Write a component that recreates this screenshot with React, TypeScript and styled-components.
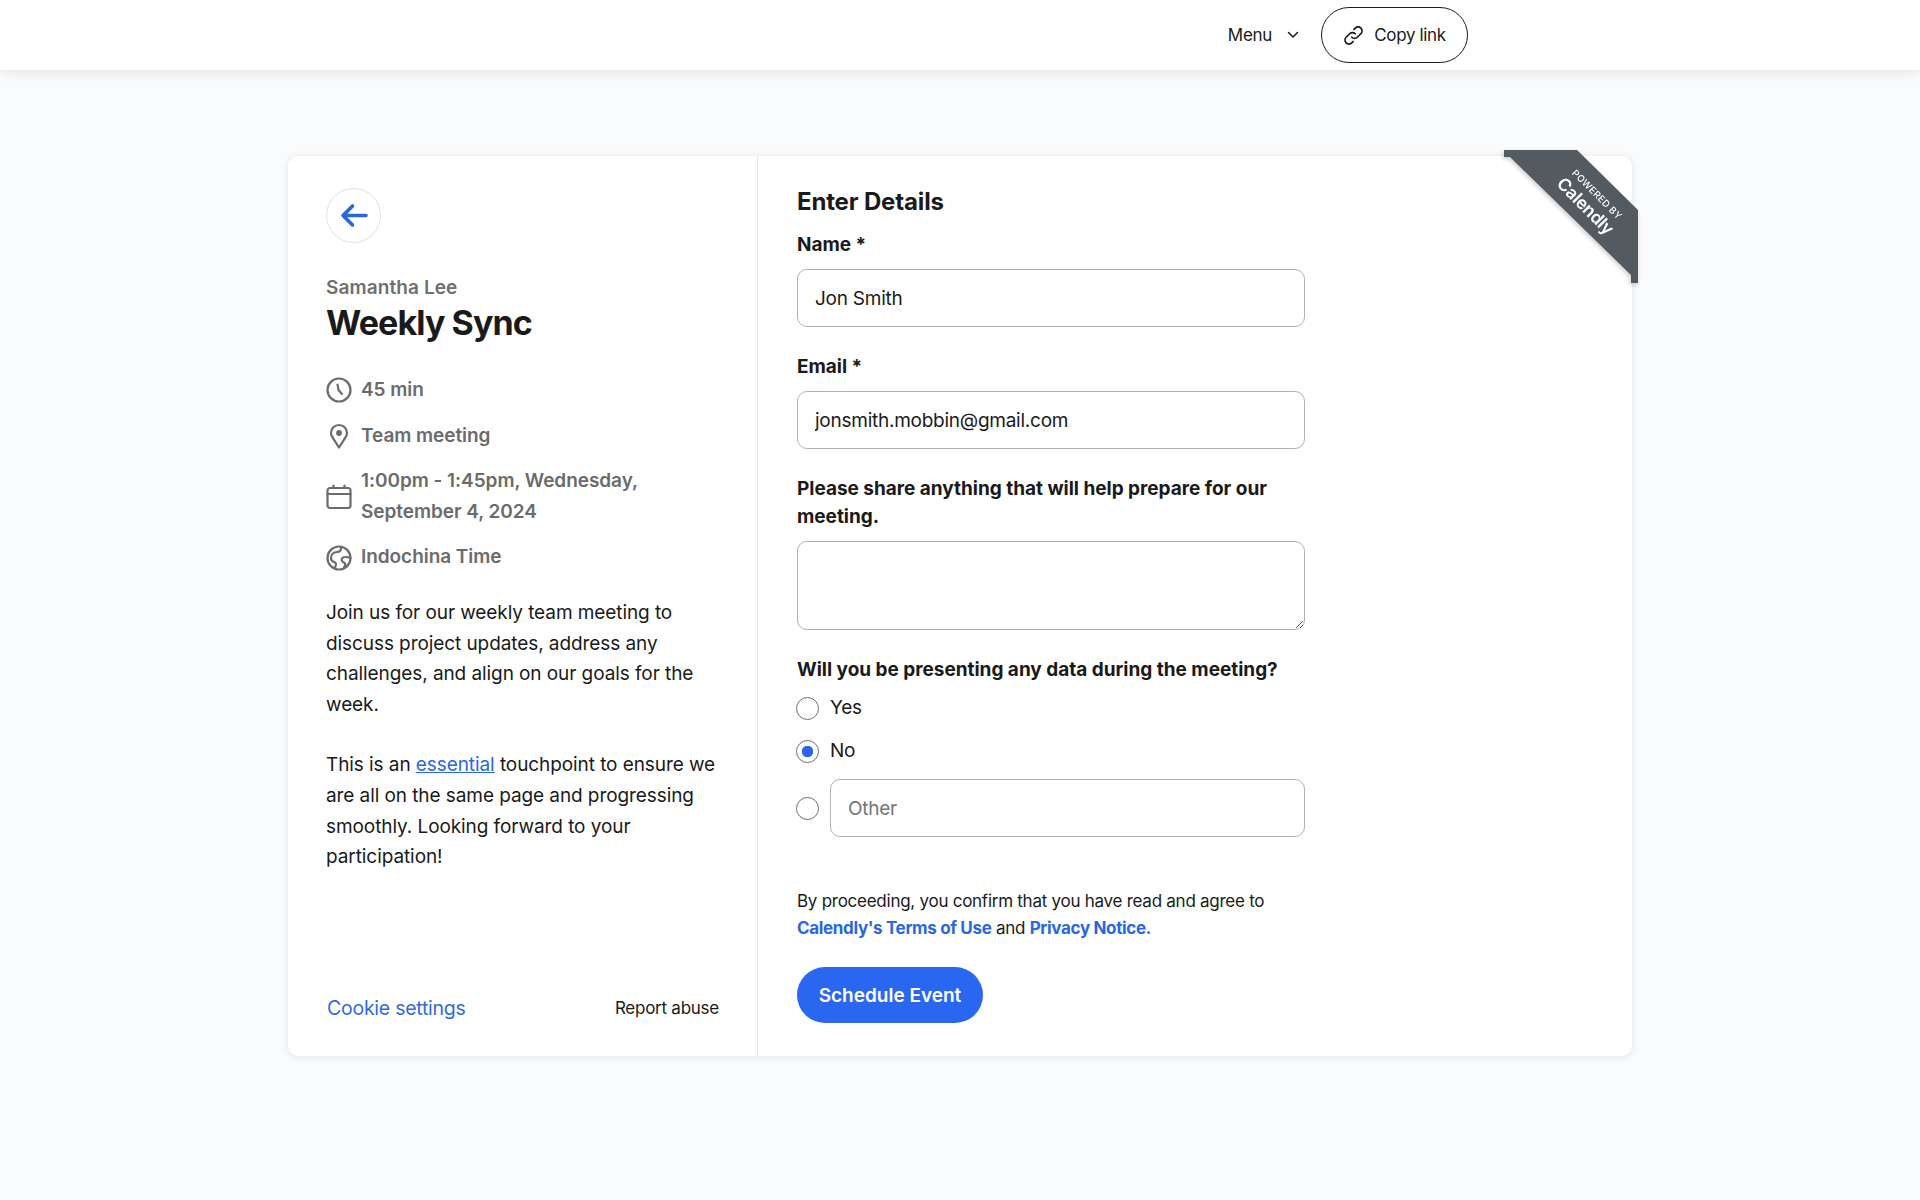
import styled, { createGlobalStyle } from 'styled-components';

const GlobalStyle = createGlobalStyle`
  html, body {
    margin: 0;
    padding: 0;
    background: #fafbfd;
  }
  * {
    box-sizing: border-box;
  }
  body {
    font-family: Inter, "Liberation Sans", sans-serif;
    color: #1a1a1a;
    min-height: 1200px;
  }
`;

const TopBar = styled.header`
  height: 70px;
  background: #fff;
  box-shadow: 0 2px 12px rgba(0, 0, 0, 0.1);
  display: flex;
  align-items: center;
  justify-content: flex-end;
  padding: 0 452px 0 0;
`;

const MenuButton = styled.div`
  display: flex;
  align-items: center;
  gap: 15px;
  font-size: 17px;
  letter-spacing: -0.3px;
  color: #1a1a1a;
  margin-right: 22px;
`;

const CopyLink = styled.div`
  height: 56px;
  width: 147px;
  border: 1.5px solid #1a1a1a;
  border-radius: 28px;
  display: flex;
  align-items: center;
  justify-content: center;
  gap: 10px;
  font-size: 17px;
  letter-spacing: -0.35px;
`;

const Card = styled.main`
  position: relative;
  width: 1344px;
  height: 900px;
  margin: 86px 0 0 288px;
  background: #fff;
  border-radius: 10px;
  box-shadow: 0 1px 8px rgba(0, 0, 0, 0.1);
  display: grid;
  grid-template-columns: 470px 1fr;
`;

const RibbonShadow = styled.div`
  position: absolute;
  top: -6px;
  right: -6px;
  filter: drop-shadow(-1px 2px 2px rgba(0, 0, 0, 0.2));
`;

const Ribbon = styled.a`
  position: relative;
  display: block;
  width: 134px;
  height: 133px;
  background: #545b60;
  clip-path: polygon(0 0, 73px 0, 134px 60px, 134px 133px, 127px 133px, 127px 125px, 6px 7px, 0 7px);
  color: #fff;
`;

const RibbonText = styled.div`
  position: absolute;
  top: 37px;
  left: 41px;
  width: 90px;
  transform: rotate(45deg);
  text-align: center;
  line-height: 1;
`;

const RibbonSmall = styled.div`
  font-size: 9.5px;
  font-weight: 500;
  letter-spacing: 0.3px;
  white-space: nowrap;
`;

const RibbonBrand = styled.div`
  font-size: 17.5px;
  font-weight: 600;
  letter-spacing: -0.3px;
  margin-top: 2px;
`;

const InfoPanel = styled.section`
  border-right: 1px solid #e8e8e8;
  padding: 32px 38px 36px;
  display: flex;
  flex-direction: column;
`;

const BackButton = styled.div`
  width: 55px;
  height: 55px;
  border-radius: 50%;
  border: 1px solid #e0e0e0;
  display: flex;
  align-items: center;
  justify-content: center;
  margin-bottom: 30px;
`;

const Organizer = styled.div`
  font-size: 19px;
  font-weight: 600;
  line-height: 30px;
  letter-spacing: 0.1px;
  color: #6f6f6f;
`;

const EventName = styled.h1`
  margin: 0 0 32px;
  font-size: 34px;
  font-weight: 700;
  line-height: 40px;
  letter-spacing: -0.9px;
  color: #1a1a1a;
`;

const MetaRow = styled.div`
  display: flex;
  align-items: center;
  gap: 9px;
  margin-bottom: 15px;
  font-size: 19px;
  font-weight: 600;
  line-height: 30.6px;
  letter-spacing: -0.05px;
  color: #6b6b6b;
`;

const MetaIcon = styled.svg`
  width: 26px;
  height: 26px;
  flex: none;
  fill: none;
  stroke: #6b6b6b;
  stroke-width: 2.2;
  stroke-linecap: round;
  stroke-linejoin: round;
`;

const DescriptionBlock = styled.div`
  margin-top: 10px;
`;

const Description = styled.p`
  margin: 0 0 30px;
  font-size: 19px;
  line-height: 30.6px;
  letter-spacing: -0.08px;
  color: #1a1a1a;
`;

const InlineLink = styled.a`
  color: #2a67e0;
  text-decoration: underline;
`;

const InfoFooter = styled.div`
  margin-top: auto;
  display: flex;
  align-items: center;
  justify-content: space-between;
  padding-left: 1px;
`;

const CookieLink = styled.a`
  font-size: 19.5px;
  letter-spacing: -0.25px;
  color: #2f6bdc;
`;

const ReportLink = styled.a`
  font-size: 17px;
  letter-spacing: -0.25px;
  color: #1a1a1a;
`;

const FormPanel = styled.section`
  padding: 29px 38px 32px 39px;
  width: 585px;
`;

const FormTitle = styled.h2`
  margin: 0 0 12px;
  font-size: 24px;
  font-weight: 700;
  line-height: 34px;
  letter-spacing: -0.15px;
`;

const Label = styled.label`
  display: block;
  font-size: 19px;
  font-weight: 700;
  line-height: 28px;
  letter-spacing: -0.02px;
  color: #1a1a1a;
  margin-bottom: 10px;
`;

const TextInput = styled.input`
  display: block;
  width: 100%;
  height: 58px;
  padding: 0 17px;
  border: 1px solid #b2b2b2;
  border-radius: 10px;
  background: #fff;
  font-family: inherit;
  font-size: 19px;
  letter-spacing: -0.25px;
  color: #1a1a1a;
  outline: none;
  margin-bottom: 26px;

  &::placeholder {
    color: #767676;
  }
`;

const TextBox = styled.textarea`
  display: block;
  width: 100%;
  height: 89px;
  border: 1px solid #b2b2b2;
  border-radius: 10px;
  background: #fff;
  outline: none;
  margin-bottom: 26px;
  resize: vertical;
`;

const RadioGroup = styled.div`
  display: flex;
  flex-direction: column;
  gap: 13px;
  margin: -1px 0 0 -1px;
`;

const RadioRow = styled.div`
  display: flex;
  align-items: center;
  gap: 11px;
  font-size: 19px;
  line-height: 30px;
  letter-spacing: -0.25px;
  color: #1a1a1a;
`;

const Radio = styled.input.attrs({ type: 'radio' })`
  appearance: none;
  flex: none;
  width: 23px;
  height: 23px;
  margin: 0;
  border: 1px solid #6f6f6f;
  border-radius: 50%;
  background: #fff;

  &:checked {
    background: radial-gradient(circle, #2a67f0 0 5.5px, #fff 6px);
  }
`;

const OtherInput = styled(TextInput)`
  flex: 1;
  margin-bottom: 0;
`;

const Legal = styled.p`
  margin: 51px 0 25px;
  font-size: 17px;
  line-height: 27px;
  letter-spacing: -0.26px;
  color: #1a1a1a;
`;

const LegalLink = styled.a`
  color: #2a67e0;
  font-weight: 700;
  letter-spacing: -0.34px;
`;

const SubmitButton = styled.button`
  width: 186px;
  height: 56px;
  border: none;
  border-radius: 28px;
  background: #2a67f0;
  color: #fff;
  font-family: inherit;
  font-size: 19px;
  font-weight: 600;
  letter-spacing: 0;
`;

export default function App() {
  return (
    <>
      <GlobalStyle />
      <TopBar>
        <MenuButton>
          Menu
          <svg width="12" height="8" viewBox="0 0 12 8" fill="none" stroke="#1a1a1a" strokeWidth="1.5" strokeLinecap="round" strokeLinejoin="round">
            <path d="M1.5 1.5 6 6l4.5-4.5" />
          </svg>
        </MenuButton>
        <CopyLink>
          <svg width="21" height="21" viewBox="0 0 24 24" fill="none" stroke="#1a1a1a" strokeWidth="2" strokeLinecap="round" strokeLinejoin="round">
            <path d="M10 14a4.5 4.5 0 0 0 6.4 0l4-4a4.5 4.5 0 0 0-6.4-6.4l-1.5 1.5" />
            <path d="M14 10a4.5 4.5 0 0 0-6.4 0l-4 4a4.5 4.5 0 0 0 6.4 6.4l1.5-1.5" />
          </svg>
          Copy link
        </CopyLink>
      </TopBar>

      <Card>
        <RibbonShadow>
          <Ribbon>
            <RibbonText>
              <RibbonSmall>POWERED BY</RibbonSmall>
              <RibbonBrand>Calendly</RibbonBrand>
            </RibbonText>
          </Ribbon>
        </RibbonShadow>

        <InfoPanel>
          <BackButton>
            <svg width="28" height="25" viewBox="0 0 28 25" fill="none" stroke="#2a67e0" strokeWidth="3.6" strokeLinecap="round" strokeLinejoin="round">
              <path d="M26 12.5H3M12.5 3 3 12.5l9.5 9.5" />
            </svg>
          </BackButton>
          <Organizer>Samantha Lee</Organizer>
          <EventName>Weekly Sync</EventName>

          <MetaRow>
            <MetaIcon viewBox="0 0 26 26">
              <circle cx="13" cy="13" r="11.5" />
              <path d="M11.5 7.5 12.5 13l3.5 4" />
            </MetaIcon>
            45 min
          </MetaRow>
          <MetaRow>
            <MetaIcon viewBox="0 0 26 26">
              <path d="M13 24.5 6.8 14.8A8 8 0 0 1 5 10a8 8 0 0 1 16 0 8 8 0 0 1-1.8 4.8Z" />
              <circle cx="13" cy="10" r="1.8" fill="#6b6b6b" />
            </MetaIcon>
            Team meeting
          </MetaRow>
          <MetaRow>
            <MetaIcon viewBox="0 0 26 26">
              <rect x="1.5" y="4" width="23" height="20" rx="2.5" />
              <path d="M1.5 10h23M7.5 1.5V4M18.5 1.5V4" />
            </MetaIcon>
            <span>
              1:00pm - 1:45pm, Wednesday,
              <br />
              September 4, 2024
            </span>
          </MetaRow>
          <MetaRow>
            <MetaIcon viewBox="0 0 26 26">
              <circle cx="13" cy="13" r="11.5" />
              <path d="M15 1.8c.8 3-1 5-4 5.2-3.5.2-6 2.5-6 6s2 3.5 4 4.5c1.5.8 1 3 0 5.2M24.5 13c-3-1-7-1.5-8.5.5-1.3 2 .8 3.5 2.5 4.5 1.2.8.8 2.5-.5 4.5" />
            </MetaIcon>
            Indochina Time
          </MetaRow>

          <DescriptionBlock>
            <Description>
              Join us for our weekly team meeting to discuss project updates, address any challenges, and align on our goals for the week.
            </Description>
            <Description>
              This is an <InlineLink>essential</InlineLink> touchpoint to ensure we are all on the same page and progressing smoothly. Looking forward to your participation!
            </Description>
          </DescriptionBlock>

          <InfoFooter>
            <CookieLink>Cookie settings</CookieLink>
            <ReportLink>Report abuse</ReportLink>
          </InfoFooter>
        </InfoPanel>

        <FormPanel>
          <FormTitle>Enter Details</FormTitle>
          <Label>Name *</Label>
          <TextInput readOnly value="Jon Smith" />
          <Label>Email *</Label>
          <TextInput readOnly value="jonsmith.mobbin@gmail.com" />
          <Label>Please share anything that will help prepare for our meeting.</Label>
          <TextBox readOnly />
          <Label>Will you be presenting any data during the meeting?</Label>
          <RadioGroup>
            <RadioRow>
              <Radio name="present" />
              Yes
            </RadioRow>
            <RadioRow>
              <Radio name="present" defaultChecked />
              No
            </RadioRow>
            <RadioRow>
              <Radio name="present" />
              <OtherInput readOnly placeholder="Other" />
            </RadioRow>
          </RadioGroup>
          <Legal>
            By proceeding, you confirm that you have read and agree to
            <br />
            <LegalLink>Calendly's Terms of Use</LegalLink> and <LegalLink>Privacy Notice.</LegalLink>
          </Legal>
          <SubmitButton>Schedule Event</SubmitButton>
        </FormPanel>
      </Card>
    </>
  );
}
